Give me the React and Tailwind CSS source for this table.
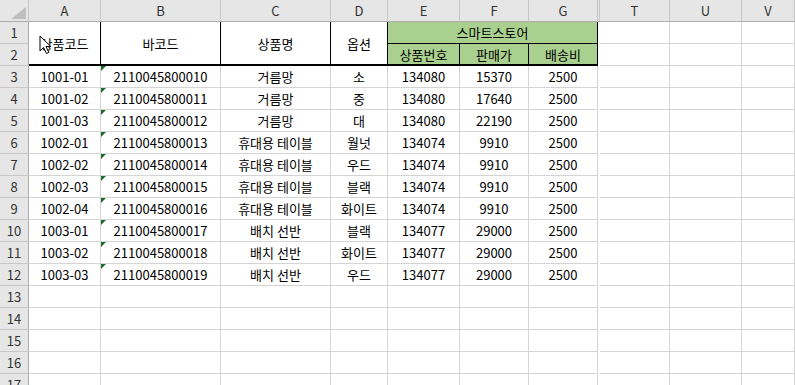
const COLS = ["A", "B", "C", "D", "E", "F", "G"];
const EXTRA = ["T", "U", "V"];

const ROWS = [
  ["1001-01", "2110045800010", "거름망", "소", "134080", "15370", "2500"],
  ["1001-02", "2110045800011", "거름망", "중", "134080", "17640", "2500"],
  ["1001-03", "2110045800012", "거름망", "대", "134080", "22190", "2500"],
  ["1002-01", "2110045800013", "휴대용 테이블", "월넛", "134074", "9910", "2500"],
  ["1002-02", "2110045800014", "휴대용 테이블", "우드", "134074", "9910", "2500"],
  ["1002-03", "2110045800015", "휴대용 테이블", "블랙", "134074", "9910", "2500"],
  ["1002-04", "2110045800016", "휴대용 테이블", "화이트", "134074", "9910", "2500"],
  ["1003-01", "2110045800017", "배치 선반", "블랙", "134077", "29000", "2500"],
  ["1003-02", "2110045800018", "배치 선반", "화이트", "134077", "29000", "2500"],
  ["1003-03", "2110045800019", "배치 선반", "우드", "134077", "29000", "2500"],
];

const cell =
  "flex items-center justify-center border-r border-b border-[#d4d4d4] bg-white text-black";
const rowHead =
  "flex items-center justify-center border-r border-b border-r-[#ababab] border-b-[#c8c8c8] bg-[#e6e6e6] text-[#333]";
const colHead =
  "flex items-center justify-center border-r border-b border-r-[#c6c6c6] border-b-[#ababab] bg-[#e6e6e6] text-[#333]";

function Cursor() {
  return (
    <svg
      className="absolute left-[39px] top-[35px]"
      width="14"
      height="20"
      viewBox="0 0 14 20"
    >
      <path
        d="M1 1 L1 16 L4.5 12.5 L7.5 18.5 L9.8 17.4 L7 11.5 L11.8 11.5 Z"
        fill="#fff"
        stroke="#000"
        strokeWidth="1"
        strokeLinejoin="miter"
      />
    </svg>
  );
}

export default function App() {
  const emptyRows = [13, 14, 15, 16, 17];

  return (
    <div className="relative w-[795px] h-[385px] overflow-hidden bg-white font-['Noto_Sans_CJK_KR','Noto_Sans',sans-serif] text-[13px] leading-none">
      <div className="grid grid-cols-[29px_72px_120px_110px_57px_72px_69px_69px_2px_70px_72px_1fr] auto-rows-[22px]">
        {/* column headers */}
        <div className={colHead + " relative border-r-[#ababab]"}>
          <svg className="absolute left-[11px] top-[7px]" width="15" height="12">
            <path d="M15 0 L15 12 L0 12 Z" fill="#bfbfbf" />
          </svg>
        </div>
        {COLS.map((c) => (
          <div key={c} className={colHead}>
            {c}
          </div>
        ))}
        <div className="border-r border-b border-r-[#c6c6c6] border-b-[#ababab] bg-[#e6e6e6]" />
        {EXTRA.map((c) => (
          <div key={c} className={colHead}>
            {c}
          </div>
        ))}

        {/* row 1 */}
        <div className={rowHead}>1</div>
        <div className="row-span-2 flex items-center justify-center border-r border-r-black border-b-2 border-b-black bg-white">
          상품코드
        </div>
        <div className="row-span-2 flex items-center justify-center border-r border-r-black border-b-2 border-b-black bg-white">
          바코드
        </div>
        <div className="row-span-2 flex items-center justify-center border-r border-r-black border-b-2 border-b-black bg-white">
          상품명
        </div>
        <div className="row-span-2 flex items-center justify-center border-r border-r-black border-b-2 border-b-black bg-white">
          옵션
        </div>
        <div className="col-span-3 flex items-center justify-center border-r border-b border-black bg-[#a9d08e]">
          스마트스토어
        </div>
        <div className="bg-white" />
        {EXTRA.map((c) => (
          <div key={c} className={cell} />
        ))}

        {/* row 2 */}
        <div className={rowHead}>2</div>
        {["상품번호", "판매가", "배송비"].map((t) => (
          <div
            key={t}
            className="flex items-center justify-center border-r border-r-black border-b-2 border-b-black bg-[#a9d08e]"
          >
            {t}
          </div>
        ))}
        <div className="bg-white" />
        {EXTRA.map((c) => (
          <div key={c} className={cell} />
        ))}

        {/* data rows */}
        {ROWS.map((r, i) => (
          <div key={i} className="contents">
            <div className={rowHead}>{i + 3}</div>
            {r.map((v, j) => (
              <div key={j} className={cell + " relative"}>
                {j === 1 && (
                  <span className="absolute left-0 top-0 w-0 h-0 border-t-[5px] border-r-[5px] border-t-[#1d6b2b] border-r-transparent" />
                )}
                {v}
              </div>
            ))}
            <div className="bg-white" />
            {EXTRA.map((c) => (
              <div key={c} className={cell} />
            ))}
          </div>
        ))}

        {emptyRows.map((n) => (
          <div key={n} className="contents">
            <div className={rowHead}>{n}</div>
            {COLS.map((c) => (
              <div key={c} className={cell} />
            ))}
            <div className="bg-white" />
            {EXTRA.map((c) => (
              <div key={c} className={cell} />
            ))}
          </div>
        ))}
      </div>
      <Cursor />
    </div>
  );
}
